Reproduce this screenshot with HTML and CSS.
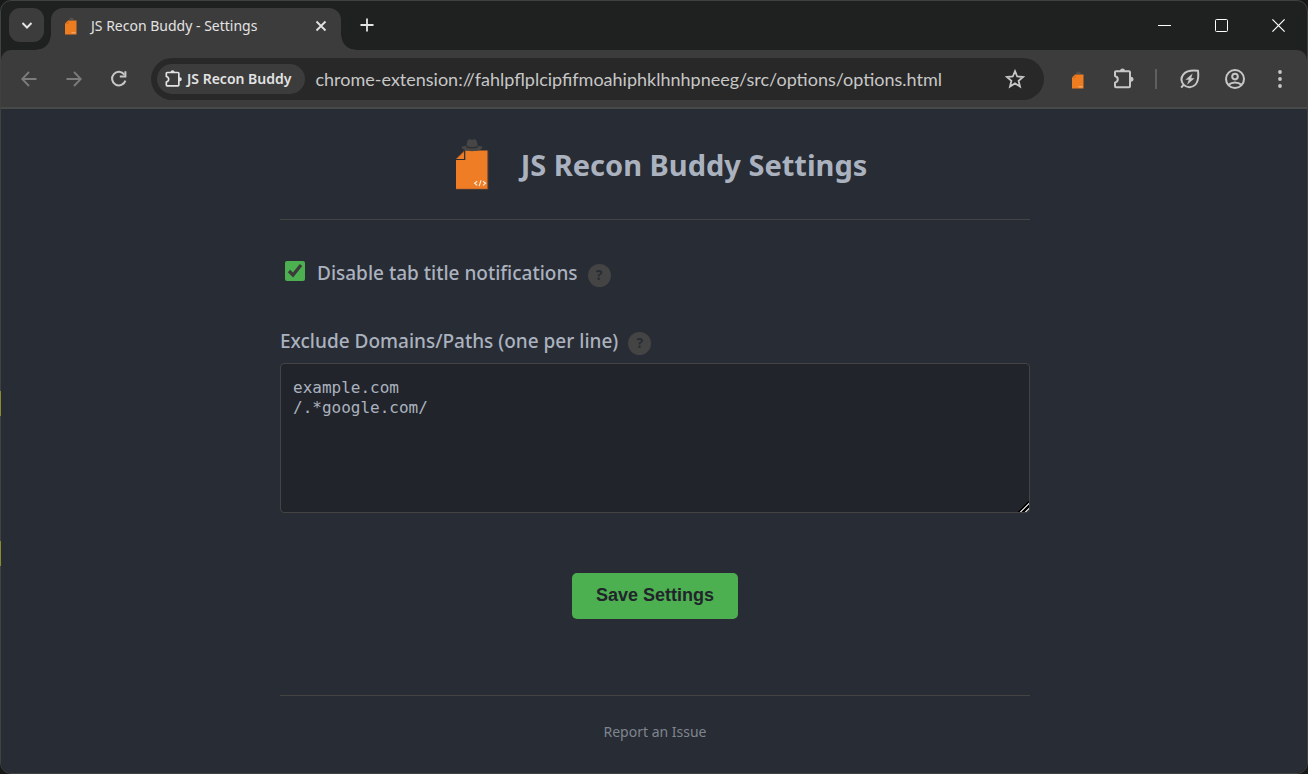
FILE: index.html
```html
<!DOCTYPE html>
<html lang="en">
<head>
<meta charset="utf-8">
<title>JS Recon Buddy - Settings</title>
<link rel="stylesheet" href="styles.css">
</head>
<body>
<svg class="defs" aria-hidden="true">
  <symbol id="puzzle" viewBox="0 0 24 24">
    <path d="M5 4.2H18Q19 4.2 19 5.2V19.3Q19 20.3 18 20.3H5Q4 20.3 4 19.3V15.6Q6.8 14.8 6.8 12.3T4 9V5.2Q4 4.2 5 4.2Z" fill="none" stroke="currentColor" stroke-width="2" stroke-linejoin="round"/>
    <path d="M9 4.4V3.6Q9.2 1.4 11.5 1.4T14 3.6V4.4ZM19 9.8H20.2Q22.6 10 22.6 12.3T20.2 14.8H19Z" fill="currentColor"/>
  </symbol>
  <symbol id="mini-logo" viewBox="0 0 14 18">
    <path d="M5 3 6 .8H9L10 3Z" fill="#514f4e"/>
    <path d="M4 3.5H12.5V17.5H1V6.5Z" fill="#ee7d22"/>
    <path d="M1.5 6.5H4.2V3.8" fill="none" stroke="#c96a1d" stroke-width=".8"/>
    <path d="M7.5 15.8H11.5" stroke="#f7b27c"/>
  </symbol>
</svg>
<div class="window">
  <header class="tabstrip">
    <button class="tab-search" aria-label="Search tabs"><svg width="14" height="14" viewBox="0 0 14 14"><path d="M2.5 5 7 9.5 11.5 5" fill="none" stroke="currentColor" stroke-width="2"/></svg></button>
    <div class="tab">
      <svg class="favicon" width="14" height="18"><use href="#mini-logo"/></svg>
      <span class="tab-title">JS Recon Buddy - Settings</span>
      <button class="tab-close" aria-label="Close tab"><svg width="12" height="12" viewBox="0 0 12 12"><path d="M1.5 1.5 10.5 10.5M10.5 1.5 1.5 10.5" stroke="currentColor" stroke-width="1.8"/></svg></button>
    </div>
    <button class="new-tab" aria-label="New tab"><svg width="14" height="14" viewBox="0 0 14 14"><path d="M7 .5V13.5M.5 7H13.5" stroke="currentColor" stroke-width="1.8"/></svg></button>
    <div class="window-controls">
      <button aria-label="Minimize"><svg width="14" height="14" viewBox="0 0 14 14"><path d="M0 7.5H13" stroke="currentColor"/></svg></button>
      <button aria-label="Maximize"><svg width="14" height="14" viewBox="0 0 14 14"><rect x=".5" y="1.5" width="12" height="12" rx="1" fill="none" stroke="currentColor"/></svg></button>
      <button aria-label="Close"><svg width="14" height="14" viewBox="0 0 14 14"><path d="M.4 1.4 12.6 13.6M12.6 1.4 .4 13.6" stroke="currentColor" stroke-width="1.2"/></svg></button>
    </div>
  </header>
  <nav class="toolbar" aria-label="Browser toolbar">
    <button class="tool dim" aria-label="Back"><svg width="16" height="16" viewBox="0 0 16 16"><path d="M15.5 8H1.5M8 1 1.2 8 8 15" fill="none" stroke="currentColor" stroke-width="1.8"/></svg></button>
    <button class="tool dim" aria-label="Forward"><svg width="16" height="16" viewBox="0 0 16 16"><path d="M.5 8H14.5M8 1 14.8 8 8 15" fill="none" stroke="currentColor" stroke-width="1.8"/></svg></button>
    <button class="tool" aria-label="Reload"><svg width="18" height="18" viewBox="0 0 18 18"><path d="M14.4 4.6A6.8 6.8 0 1 0 15.4 10.6" fill="none" stroke="currentColor" stroke-width="2"/><path d="M15.4 1.2V6.6H9.8" fill="none" stroke="currentColor" stroke-width="2"/></svg></button>
    <div class="omnibox">
      <span class="chip"><svg width="20" height="20"><use href="#puzzle"/></svg>JS Recon Buddy</span>
      <input class="url" type="text" aria-label="Address" value="chrome-extension://fahlpflplcipfifmoahiphklhnhpneeg/src/options/options.html">
      <button class="star" aria-label="Bookmark this page"><svg width="20" height="20" viewBox="0 0 20 20"><path d="M10 2.2 12.2 7.5 18 8 13.6 11.8 15 17.5 10 14.4 5 17.5 6.4 11.8 2 8 7.8 7.5Z" fill="none" stroke="currentColor" stroke-width="1.8"/></svg></button>
    </div>
    <div class="actions">
      <button class="tool" aria-label="JS Recon Buddy"><svg class="ext" width="14" height="18"><use href="#mini-logo"/></svg></button>
      <button class="tool" aria-label="Extensions"><svg width="24" height="24"><use href="#puzzle"/></svg></button>
      <span class="divider"></span>
      <button class="tool" aria-label="Energy saver"><svg width="20" height="20" viewBox="0 0 20 20"><path d="M18 1.8C11 1 6 2.3 3.4 5.4C.6 9 1.4 13 3.6 15.6C7 19.2 12.2 18.8 15.4 15.6C18.2 12.6 18.7 7.6 18 1.8ZM4.2 15 1.2 18.6" fill="none" stroke="currentColor" stroke-width="2"/><path d="M12.6 4.4 5.4 10.8H8.8L7 15.8 14.6 9.2H11.2Z" fill="currentColor"/></svg></button>
      <button class="tool" aria-label="Profile"><svg width="22" height="22" viewBox="0 0 22 22" fill="none" stroke="currentColor" stroke-width="2"><circle cx="11" cy="11" r="9"/><circle cx="11" cy="8.6" r="2.8"/><path d="M4.6 16.8C8 13.6 14 13.6 17.4 16.8"/></svg></button>
      <button class="tool" aria-label="Menu"><svg width="4" height="18" viewBox="0 0 4 18" fill="currentColor"><circle cx="2" cy="2" r="1.9"/><circle cx="2" cy="9" r="1.9"/><circle cx="2" cy="16" r="1.9"/></svg></button>
    </div>
  </nav>
  <main class="page">
    <div class="container">
      <div class="title-row">
        <svg class="logo" width="34" height="52" viewBox="0 0 34 52" aria-hidden="true">
          <path d="M10.2 11.5H32.5V50H1V20.5Z" fill="#ee7d26"/>
          <path d="M1 20.5H9.7V11.5" fill="none" stroke="#2b2d33" stroke-width="1.2"/>
          <path d="M1 20 9.3 11.8" fill="none" stroke="#b8632a" stroke-width=".6"/>
          <path d="M1 50H32.8V11.5" fill="none" stroke="#a25c2c" stroke-width=".6"/>
          <path d="M11.6 6.8C12 2.5 12.6 .4 14.2 .2C15.4 0 15.8 .8 17 .8S18.6 0 19.8 .2C21.6 .4 22.2 2.5 22.6 6.8C25 7.2 27.2 7 27.4 8C27.6 10.4 22.4 12.2 17 12.2S6.4 10.4 6.6 8C6.8 7 9.2 7.2 11.6 6.8Z" fill="#464646"/>
          <path d="M11.4 6.8Q17 9.4 22.8 6.8V8.4Q17 10.8 11.2 8.4Z" fill="#303134"/>
          <path d="M22.2 42.2 19.6 44.3 22.2 46.4M28 42.2 30.6 44.3 28 46.4M26 41.4 24.2 47.2" fill="none" stroke="#fff0e0" stroke-width="1.1"/>
        </svg>
        <h1>JS Recon Buddy Settings</h1>
      </div>
      <form class="settings">
        <div class="check-row">
          <input type="checkbox" id="disable-title" checked>
          <label for="disable-title">Disable tab title notifications</label>
          <button type="button" class="help" aria-label="About title notifications">?</button>
        </div>
        <div class="label-row">
          <label for="exclude">Exclude Domains/Paths (one per line)</label>
          <button type="button" class="help" aria-label="About exclusions">?</button>
        </div>
        <textarea id="exclude" spellcheck="false">example.com
/.*google.com/</textarea>
        <button type="submit" class="save">Save Settings</button>
      </form>
      <footer><a href="#issue">Report an Issue</a></footer>
    </div>
  </main>
</div>
</body>
</html>
```
FILE: styles.css
```css
* { box-sizing: border-box; }
body {
  margin: 0;
  background: #171818;
  color: #abb2bf;
  font-family: "Noto Sans", "Open Sans", sans-serif;
}
button {
  display: grid;
  place-items: center;
  padding: 0;
  border: 0;
  background: none;
  color: inherit;
  font: inherit;
}
svg { display: block; }
.defs { position: absolute; width: 0; height: 0; }

.window {
  position: relative;
  display: flex;
  flex-direction: column;
  min-height: 100vh;
  border: 1px solid #40423f;
  border-radius: 11px;
  background: #1f2120;
}
/* highlights along the left window edge */
.window::before {
  content: "";
  position: absolute;
  top: 390px;
  left: -1px;
  width: 1px;
  height: 175px;
  background: linear-gradient(#8b8b2c 25px, transparent 25px 150px, #8b8b2c 150px);
}

.tabstrip {
  display: flex;
  align-items: flex-start;
  height: 49px;
  padding: 7px 0 0 8px;
  color: #e3e3e3;
}
.tab-search {
  width: 35px;
  height: 34px;
  border-radius: 11px;
  background: #3c3c3c;
}
.tab {
  position: relative;
  display: flex;
  align-items: center;
  width: 290px;
  height: 42px;
  margin-left: 7px;
  padding: 0 14px 6px 13px;
  border-radius: 12px 12px 0 0;
  background: #3c3c3c;
}
.tab::before,
.tab::after {
  content: "";
  position: absolute;
  bottom: 0;
  width: 14px;
  height: 14px;
}
.tab::before { right: 100%; background: radial-gradient(circle at 0 0, transparent 13px, #3c3c3c 14px); }
.tab::after { left: 100%; background: radial-gradient(circle at 100% 0, transparent 13px, #3c3c3c 14px); }
.tab-title { flex: 1; margin-left: 13px; font-size: 14px; line-height: 20px; }
.window-controls { display: flex; height: 34px; margin-left: auto; color: #fff; }
.window-controls button { width: 57px; }
.new-tab { width: 34px; height: 34px; margin-left: 9px; }

.toolbar {
  display: flex;
  align-items: center;
  height: 59px;
  padding: 0 5px;
  border-bottom: 2px solid #474a48;
  border-radius: 10px 10px 0 0;
  background: #3c3c3c;
  color: #c7c7c7;
}
.tool { width: 45px; height: 42px; }
.dim { color: #7c7c7c; }
.ext { margin-top: 3px; }
.omnibox {
  flex: 1;
  display: flex;
  align-items: center;
  min-width: 0;
  height: 42px;
  margin: 0 11px 0 10px;
  padding: 0 14px 0 6px;
  border-radius: 21px;
  background: #282828;
}
.chip {
  display: flex;
  align-items: center;
  gap: 4px;
  height: 30px;
  padding: 0 14px 0 6px;
  border-radius: 15px;
  background: #3c3c3c;
  color: #e3e3e3;
  font-size: 14px;
  font-weight: 600;
  white-space: nowrap;
}
.url {
  flex: 1;
  min-width: 0;
  padding: 0 0 0 10px;
  border: 0;
  background: none;
  color: #c7c7c7;
  font: 18px/24px Lato, "Noto Sans", sans-serif;
}
.star { width: 30px; height: 30px; }
.actions { display: flex; align-items: center; }
.divider { width: 2px; height: 20px; margin: 0 10px; background: #5f5f5f; }

.page {
  flex: 1;
  padding: 30px 20px 30px 22px;
  border-radius: 0 0 10px 10px;
  background: #282c34;
}
.container { max-width: 750px; margin: 0 auto; }
.title-row {
  display: flex;
  justify-content: center;
  align-items: center;
  gap: 32px;
  padding: 0 0 28px 12px;
  border-bottom: 1px solid #444;
}
h1 { margin: 0; font-size: 29px; line-height: 40px; font-weight: 700; }
.settings { display: flex; flex-direction: column; padding: 39px 0 76px; }
.check-row,
.label-row { display: flex; align-items: center; gap: 10px; font-size: 19px; line-height: 28px; font-weight: 500; }
.check-row { padding-left: 5px; }
.check-row input {
  width: 20px;
  height: 20px;
  margin: 0 2px 4px 0;
  accent-color: #4caf50;
}
.label-row { margin: 40px 0 8px; }
.help {
  width: 23px;
  height: 23px;
  margin-top: 5px;
  padding-bottom: 1px;
  border-radius: 50%;
  background: #444;
  color: #282c34;
  font-size: 14px;
  line-height: 20px;
  font-weight: 700;
}
textarea {
  height: 150px;
  padding: 14px 12px 12px;
  border: 1px solid #444;
  border-radius: 4px;
  background: #21252b;
  color: #abb2bf;
  font: 16px/20px "DejaVu Sans Mono", "Noto Sans Mono", monospace;
  resize: vertical;
}
textarea::-webkit-resizer {
  background: linear-gradient(135deg, transparent 62%, #000 62% 68%, #bbb 68% 76%, #000 76% 86%, #bbb 86% 92%, transparent 92%);
}
.save {
  align-self: center;
  margin-top: 60px;
  padding: 11px 24px 13px;
  border-radius: 5px;
  background: #4caf50;
  color: #21252b;
  font: bold 18px/22px "Liberation Sans", sans-serif;
}
footer { padding-top: 24px; border-top: 1px solid #444; text-align: center; }
footer a { color: #7f858f; font-size: 14px; line-height: 22px; text-decoration: none; }
```
